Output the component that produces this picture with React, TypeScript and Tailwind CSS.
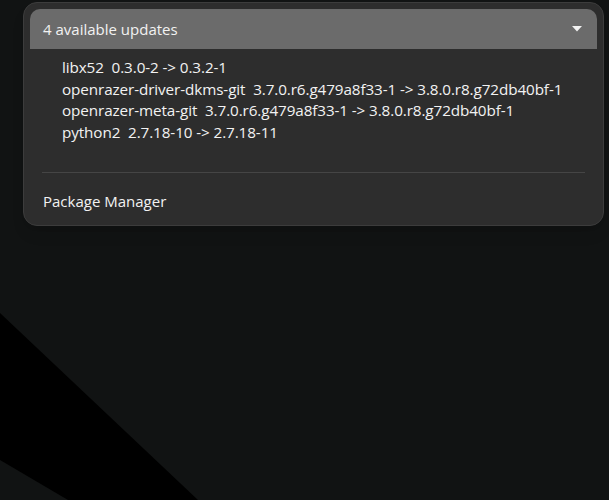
const updates = [
  ["libx52", "0.3.0-2 -> 0.3.2-1"],
  ["openrazer-driver-dkms-git", "3.7.0.r6.g479a8f33-1 -> 3.8.0.r8.g72db40bf-1"],
  ["openrazer-meta-git", "3.7.0.r6.g479a8f33-1 -> 3.8.0.r8.g72db40bf-1"],
  ["python2", "2.7.18-10 -> 2.7.18-11"],
];

export default function App() {
  return (
    <div
      className="relative w-[609px] h-[500px] overflow-hidden bg-[#111313] text-[#f2f2f2]"
      style={{ fontFamily: '"Open Sans", "Noto Sans", sans-serif' }}
    >
      <svg className="absolute inset-0" width="609" height="500">
        <polygon points="0,313 198,500 68,500 0,460" fill="#000" />
      </svg>
      <div className="relative ml-[23px] mt-[2px] w-[581px] rounded-[14px] border border-[#3c3c3c] bg-[#2d2d2d] p-[6px] pb-0 shadow-lg">
        <div className="flex h-[40px] items-center justify-between rounded-t-[10px] bg-[#6b6b6b] pl-[13px] pr-[14px] text-[15px]">
          <span>4 available updates</span>
          <svg width="12" height="8" viewBox="0 0 12 8">
            <polygon points="1,1 11,1 6,6.5" fill="#f2f2f2" />
          </svg>
        </div>
        <div className="pl-[32px] pt-[8px] text-[15.25px] leading-[21.5px] tracking-[-0.1px]">
          {updates.map(([name, ver]) => (
            <div key={name} className="whitespace-pre">
              {name}  {ver}
            </div>
          ))}
        </div>
        <div className="mx-[12px] mt-[29px] h-px bg-[#454545]" />
        <div className="pl-[13px] pt-[17px] pb-[12px] text-[15px]">Package Manager</div>
      </div>
    </div>
  );
}
